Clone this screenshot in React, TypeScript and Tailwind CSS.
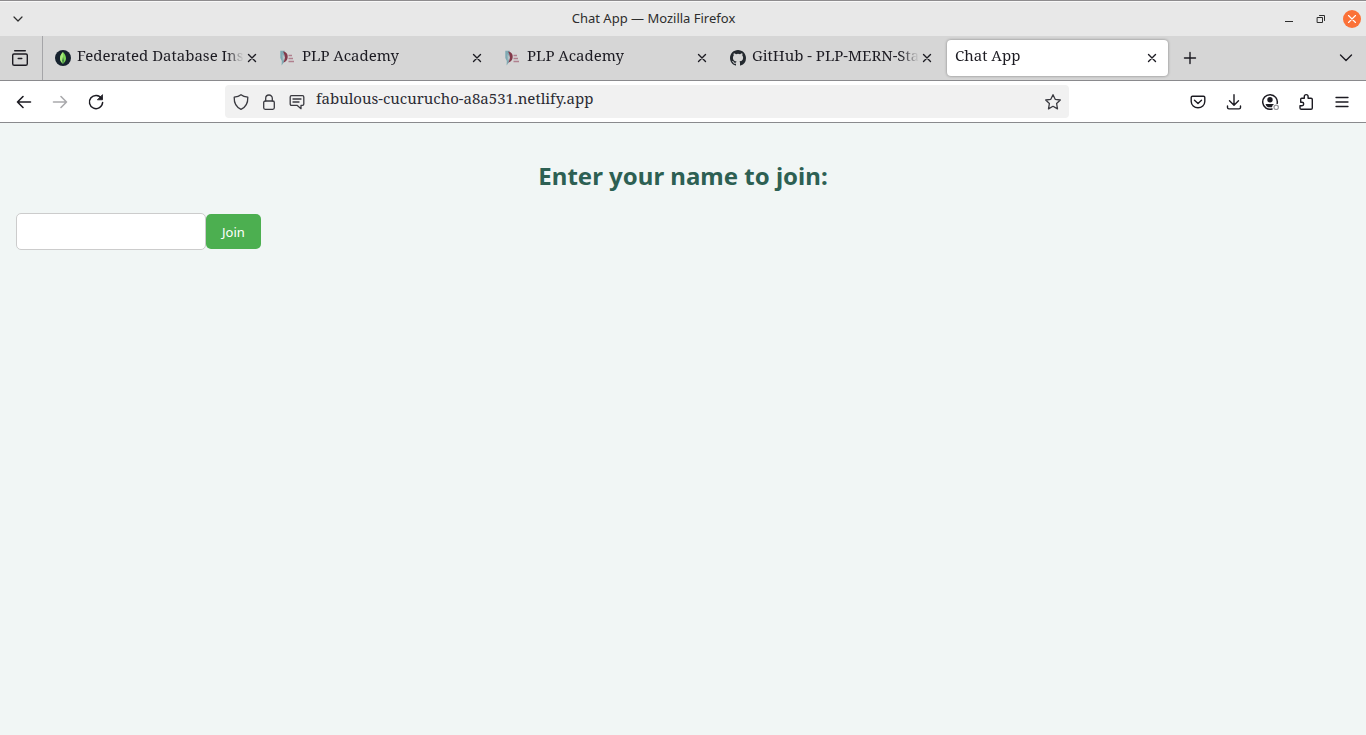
import React, { useState } from 'react';

const tabs = [
  { title: 'Federated Database Inst', icon: 'leaf' },
  { title: 'PLP Academy', icon: 'plp' },
  { title: 'PLP Academy', icon: 'plp' },
  { title: 'GitHub - PLP-MERN-Stac', icon: 'github' },
  { title: 'Chat App', icon: '' },
];

const serif = "font-['Noto_Serif','Droid_Serif','DejaVu_Serif',serif]";

function Icon({ children, size = 18 }: { children: React.ReactNode; size?: number }) {
  return (
    <svg
      width={size}
      height={size}
      viewBox={`0 0 ${size} ${size}`}
      fill="none"
      stroke="currentColor"
      strokeWidth="1.4"
      strokeLinecap="round"
      strokeLinejoin="round"
      aria-hidden="true"
      className="shrink-0"
    >
      {children}
    </svg>
  );
}

function Favicon({ name }: { name: string }) {
  if (name === 'leaf') {
    return (
      <svg width="16" height="16" viewBox="0 0 16 16" className="shrink-0" aria-hidden="true">
        <circle cx="8" cy="8" r="8" fill="#16222e" />
        <path d="M8 2C9.8 4 11 6 11 8.400C11 10.600 9.700 12 8.300 13.400H7.700C6.300 12 5 10.600 5 8.400C5 6 6.200 4 8 2Z" fill="#7bd657" />
        <path d="M8 2C6.200 4 5 6 5 8.400C5 10.600 6.300 12 7.700 13.400H8Z" fill="#a8e87c" />
        <path d="M8 6.500L8.700 10.500L8.300 14H7.700L7.300 10.500Z" fill="#2c6b3c" />
      </svg>
    );
  }
  if (name === 'plp') {
    return (
      <svg width="16" height="16" viewBox="0 0 16 16" className="shrink-0" aria-hidden="true">
        <path d="M0.300 0.800H4.800L4 12L1.600 15.500L1.800 11L0.300 8Z" fill="#7fa9b3" />
        <path d="M3 1.500C7 2 8.200 5 7.600 8C7.100 10.700 5.500 12 3.300 12.600C5.200 9.500 5.400 5.500 3 1.500Z" fill="#83394a" />
        <path d="M2.500 4L5 7.500L2.800 11Z" fill="#b5c3c7" />
        <path d="M8.500 5.500H12M8.500 8.500H13M8.500 11.500H14" stroke="#b0808e" strokeWidth="1.300" />
      </svg>
    );
  }
  return (
    <svg width="16" height="16" viewBox="0 0 16 16" fill="#24292f" className="shrink-0" aria-hidden="true">
      <path d="M8 0C3.580 0 0 3.580 0 8c0 3.540 2.290 6.530 5.470 7.590.4.070.55-.17.55-.38 0-.19-.01-.82-.01-1.490-2.010.37-2.530-.49-2.690-.94-.09-.23-.48-.94-.82-1.130-.28-.15-.68-.52-.01-.53.63-.01 1.080.58 1.230.82.72 1.210 1.870.87 2.330.66.07-.52.28-.87.51-1.070-1.780-.2-3.640-.89-3.640-3.950 0-.87.31-1.590.82-2.150-.08-.2-.36-1.020.08-2.120 0 0 .67-.21 2.200.82a7.640 7.640 0 0 1 4 0c1.530-1.040 2.200-.82 2.200-.82.44 1.100.16 1.920.08 2.120.51.56.82 1.270.82 2.150 0 3.070-1.870 3.750-3.650 3.950.29.25.54.73.54 1.480 0 1.070-.01 1.930-.01 2.200 0 .21.15.46.55.38A8.010 8.010 0 0 0 16 8c0-4.420-3.580-8-8-8Z" />
    </svg>
  );
}

function ToolButton({ label, disabled, children }: { label: string; disabled?: boolean; children: React.ReactNode }) {
  return (
    <button
      type="button"
      aria-label={label}
      disabled={disabled}
      className="flex size-8 items-center justify-center text-[#1c1b22] disabled:text-[#a9a9ac]"
    >
      <Icon>{children}</Icon>
    </button>
  );
}

function TitleBar() {
  return (
    <header className="flex h-9 items-center border-t border-[#8e8c8e] bg-[#e8e8e8] pr-[5px] pl-1 text-[#2d2d2d] shadow-[inset_0_1px_0_#f8f8f8]">
      <button type="button" aria-label="Window menu" className="flex size-7 items-center justify-center">
        <Icon size={16}><path d="M4 6L8 10L12 6" strokeWidth="1.200" /></Icon>
      </button>
      <h1 className="flex-1 text-center font-['Noto_Sans',sans-serif] text-[13px]">Chat App — Mozilla Firefox</h1>
      <div className="flex items-center justify-end gap-1">
        <button type="button" aria-label="Minimize" className="flex size-7 items-center justify-center">
          <Icon size={16}><path d="M4 10.500H12" strokeWidth="1" strokeLinecap="butt" /></Icon>
        </button>
        <button type="button" aria-label="Restore" className="flex size-7 items-center justify-center">
          <Icon size={16}>
            <path d="M4.500 6.500H9.500V11.500H4.500ZM6.500 4.500H11.500V9.500" strokeWidth="1" />
          </Icon>
        </button>
        <button type="button" aria-label="Close window" className="ml-1 flex size-[18px] items-center justify-center rounded-full bg-[#fb7138] text-white">
          <Icon size={18}><path d="M5.500 5.500L12.500 12.500M12.500 5.500L5.500 12.500" strokeWidth="1.100" /></Icon>
        </button>
      </div>
    </header>
  );
}

function TabStrip({ active, onSelect }: { active: number; onSelect: (index: number) => void }) {
  return (
    <nav aria-label="Tabs" className="flex h-[45px] items-stretch border-b border-[#8a8a8d] bg-[#d6d6d6] text-[#1c1b22]">
      <button type="button" aria-label="Recent browsing" className="flex w-[43px] shrink-0 items-center justify-center border-r border-[#a5a5a8] pr-0.5">
        <Icon>
          <path d="M3.700 1.700H14.300" />
          <path d="M3 5H15Q16.300 5 16.300 6.300V14.700Q16.300 16.300 14.700 16.300H3.300Q1.700 16.300 1.700 14.700V6.300Q1.700 5 3 5ZM7.200 9.500H10.800" />
        </Icon>
      </button>
      <div className="flex min-w-0 flex-1 px-0.5">
        {tabs.map((tab, index) => (
          <div key={index} className="min-w-0 max-w-[225px] flex-1 px-0.5 py-1">
            <div
              className={
                index === active
                  ? 'flex h-9 items-center rounded-[4px] bg-white px-2 shadow-[0_0_3px_rgba(0,0,0,0.4)]'
                  : 'flex h-9 items-center rounded-[4px] px-2'
              }
            >
              {tab.icon && <Favicon name={tab.icon} />}
              <button
                type="button"
                onClick={() => onSelect(index)}
                className={`${serif} ${tab.icon ? 'ml-1.5 ' : ''}min-w-0 flex-1 overflow-hidden whitespace-nowrap pb-1.5 text-left text-[15px] leading-5 [mask-image:linear-gradient(to_left,transparent,black_18px)]`}
              >
                {tab.title}
              </button>
              <button type="button" aria-label={`Close ${tab.title}`} className="shrink-0">
                <Icon size={16}><path d="M4.500 4.500L11.500 11.500M11.500 4.500L4.500 11.500" /></Icon>
              </button>
            </div>
          </div>
        ))}
        <button type="button" aria-label="New tab" className="ml-1 flex w-8 shrink-0 items-center justify-center">
          <Icon><path d="M9 3.500V14.500M3.500 9H14.500" /></Icon>
        </button>
      </div>
      <button type="button" aria-label="List all tabs" className="flex w-10 shrink-0 items-center justify-center">
        <Icon><path d="M3.500 6L9 11.500L14.500 6" /></Icon>
      </button>
    </nav>
  );
}

function Toolbar() {
  return (
    <div className="flex h-[42px] items-center border-b border-[#8a8a8d] bg-white px-2 text-[#1c1b22]">
      <div className="flex shrink-0 gap-1">
        <ToolButton label="Back"><path d="M15.500 9H2.500M8 3.500L2.500 9L8 14.500" strokeWidth="1.600" /></ToolButton>
        <ToolButton label="Forward" disabled><path d="M2.500 9H15.500M10 3.500L15.500 9L10 14.500" strokeWidth="1.600" /></ToolButton>
        <ToolButton label="Reload">
          <path d="M14.600 5.500A6.600 6.600 0 1 0 15.600 9.500" strokeWidth="1.500" />
          <path d="M15.500 2V6.800H10.700Z" fill="currentColor" strokeWidth="0.800" />
        </ToolButton>
      </div>
      <div className="grow-[100]" />
      <div className="flex h-[33px] min-w-0 grow-[735] basis-0 items-center gap-2.5 rounded-[4px] bg-[#f1f1f1] px-[7px] text-[#3a3a40]">
        <Icon>
          <path d="M9 1.700C11 3.300 13.300 3.900 15.800 4.200C16 9.500 14 14 9 16.300C4 14 2 9.500 2.200 4.200C4.700 3.900 7 3.300 9 1.700Z" strokeWidth="1.300" />
        </Icon>
        <Icon>
          <rect x="3.700" y="8" width="10.600" height="8.300" rx="1.500" strokeWidth="1.300" />
          <path d="M5.700 8V5.300A3.300 3.300 0 0 1 12.300 5.300V8" strokeWidth="1.300" />
        </Icon>
        <Icon>
          <path d="M3.500 2.700H14.500Q15.800 2.700 15.800 4V11Q15.800 12.300 14.500 12.300H13V15.700L9 12.300H3.500Q2.200 12.300 2.200 11V4Q2.200 2.700 3.500 2.700ZM5 6H13M5 9H11" strokeWidth="1.300" />
        </Icon>
        <input
          aria-label="Address"
          defaultValue="fabulous-cucurucho-a8a531.netlify.app"
          className={`${serif} min-w-0 flex-1 bg-transparent pb-2 text-[15px] leading-6 text-[#2b2a33] outline-none`}
        />
        <button type="button" aria-label="Bookmark this page">
          <Icon>
            <path d="M9 1.700L11.200 6.300L16.300 7L12.600 10.500L13.500 15.900L9 13.300L4.500 15.900L5.400 10.500L1.700 7L6.800 6.300Z" strokeWidth="1.300" />
          </Icon>
        </button>
      </div>
      <div className="grow-[100]" />
      <div className="flex shrink-0 gap-1">
        <ToolButton label="Save to Pocket">
          <path d="M3.500 3.200H14.500Q15.800 3.200 15.800 4.500V8.500A6.800 6.300 0 0 1 2.200 8.500V4.500Q2.200 3.200 3.500 3.200ZM5.500 7.300L9 10.500L12.500 7.300" />
        </ToolButton>
        <ToolButton label="Downloads">
          <path d="M9 1.700V12M4.500 7.800L9 12.200L13.500 7.800M2.500 13V14.500Q2.500 15.900 4 15.900H14Q15.500 15.900 15.500 14.500V13" />
        </ToolButton>
        <ToolButton label="Account">
          <path d="M11 16A7.300 7.300 0 1 1 16.200 10.300" strokeWidth="1.500" />
          <circle cx="9" cy="6.700" r="2.700" fill="currentColor" stroke="none" />
          <path d="M4.500 11H13L11.500 12.500L11 14.300H7Q5 13.500 4.500 11Z" fill="currentColor" stroke="none" />
          <circle cx="15.200" cy="14.300" r="2.200" stroke="#9a9a9e" strokeWidth="1.200" />
        </ToolButton>
        <ToolButton label="Extensions">
          <path d="M7.300 5.300V3.500A1.900 1.900 0 0 1 11.100 3.500V5.300H14Q15.300 5.300 15.300 6.600V15Q15.300 16.300 14 16.300H4.300Q3 16.300 3 15V12.700H5A1.700 1.700 0 0 0 5 9.300H3.700V6.300Q3.700 5.300 4.700 5.300Z" />
        </ToolButton>
        <ToolButton label="Application menu">
          <path d="M3 4.500H15M3 9H15M3 13.500H15" strokeWidth="1.300" />
        </ToolButton>
      </div>
    </div>
  );
}

function JoinPage() {
  const [name, setName] = useState('');
  return (
    <main className="flex-1 bg-[#f1f6f5] px-4 pt-[35px] font-['Noto_Sans',sans-serif]">
      <h2 id="join-heading" className="text-center text-2xl leading-9 font-bold text-[#2d6053]">Enter your name to join:</h2>
      <form className="mt-[19px] flex items-center" onSubmit={(event) => event.preventDefault()}>
        <input
          aria-labelledby="join-heading"
          value={name}
          onChange={(event) => setName(event.target.value)}
          className="h-[37px] w-[190px] rounded-[5px] border border-[#cccccc] bg-white px-2 text-[13px]"
        />
        <button type="submit" className="h-[35px] rounded-[5px] bg-[#4caf50] px-4 pt-0.5 text-[13px] text-white">Join</button>
      </form>
    </main>
  );
}

export default function App() {
  const [active, setActive] = useState(4);
  return (
    <div className="flex min-h-screen flex-col">
      <TitleBar />
      <TabStrip active={active} onSelect={setActive} />
      <Toolbar />
      <JoinPage />
    </div>
  );
}
